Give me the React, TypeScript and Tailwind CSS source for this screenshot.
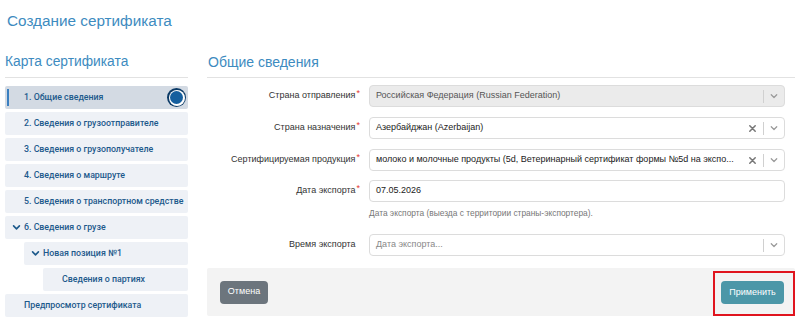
import React from "react";

const F = { fontFamily: '"Liberation Sans", Arial, sans-serif' };
const R = { fontFamily: 'Roboto, "Liberation Sans", Arial, sans-serif' };

function Chevron() {
  return (
    <svg width="10" height="10" viewBox="0 0 20 20" className="text-[#999]">
      <path d="M4.5 7.5 L10 13 L15.5 7.5" fill="none" stroke="currentColor" strokeWidth="2.4" strokeLinecap="round" strokeLinejoin="round" />
    </svg>
  );
}

function Cross() {
  return (
    <svg width="9" height="9" viewBox="0 0 20 20" className="text-[#777]">
      <path d="M4 4 L16 16 M16 4 L4 16" fill="none" stroke="currentColor" strokeWidth="3.4" strokeLinecap="round" />
    </svg>
  );
}

function DownSmall() {
  return (
    <svg width="9" height="9" viewBox="0 0 20 20" className="text-[#1d5a8c] shrink-0">
      <path d="M3.5 6.5 L10 13 L16.5 6.5" fill="none" stroke="currentColor" strokeWidth="3.6" strokeLinecap="round" strokeLinejoin="round" />
    </svg>
  );
}

function NavItem({ children, active, indent = 0, pl = "pl-[19px]" }: { children: React.ReactNode; active?: boolean; indent?: number; pl?: string }) {
  return (
    <div
      className={`relative h-[23px] flex items-center rounded-[2px] ${pl} text-[8.8px] font-medium text-[#1d5a8c] whitespace-nowrap ${active ? "bg-[#d3dae3]" : "bg-[#eef1f6]"}`}
      style={{ ...R, marginLeft: indent }}
    >
      {active && <div className="absolute left-[2px] top-[3px] bottom-[3px] w-[2px] bg-[#3a7fc0]" />}
      {children}
      {active && (
        <div className="absolute right-[2px] top-[2px] w-[19px] h-[19px] rounded-full bg-[#0b3a66] flex items-center justify-center">
          <div className="w-[16px] h-[16px] rounded-full bg-white flex items-center justify-center">
            <div className="w-[13px] h-[13px] rounded-full bg-[#155f9e]" />
          </div>
        </div>
      )}
    </div>
  );
}

function Label({ children, req }: { children: React.ReactNode; req?: boolean }) {
  return (
    <div className="w-[155px] shrink-0 text-right text-[9px] text-[#333] pr-[2px] whitespace-nowrap">
      {children}
      {req ? <span className="text-[#e53935] relative top-[-2px] ml-[1px]">*</span> : <span className="ml-[1px] invisible">*</span>}
    </div>
  );
}

function Select({ value, disabled, clear, placeholder }: { value?: string; disabled?: boolean; clear?: boolean; placeholder?: string }) {
  return (
    <div className={`ml-[7px] w-[416px] h-[22px] rounded-[4px] border border-[#dcdcdc] flex items-center ${disabled ? "bg-[#ebebeb]" : "bg-white"}`}>
      <div className={`flex-1 min-w-0 pl-[6px] text-[9px] whitespace-nowrap overflow-hidden ${placeholder ? "text-[#888]" : disabled ? "text-[#555]" : "text-[#222]"}`}>
        {value ?? placeholder}
      </div>
      {clear && (
        <div className="w-[22px] flex items-center justify-center">
          <Cross />
        </div>
      )}
      <div className="w-px h-[13px] bg-[#d0d0d0]" />
      <div className="w-[20px] flex items-center justify-center">
        <Chevron />
      </div>
    </div>
  );
}

export default function App() {
  return (
    <div className="w-[800px] h-[323px] bg-white overflow-hidden" style={F}>
      <div className="pl-[7px] pt-[11px] h-[52px] text-[15.3px] leading-[20px] text-[#3d8bc0]">Создание сертификата</div>
      <div className="flex pl-[5px] pr-[5px] gap-[19px]">
        <div className="w-[183px] shrink-0">
          <div className="text-[13.8px] text-[#3d8bc0] leading-[20px] pb-[5px] border-b border-[#e2e2e2]">Карта сертификата</div>
          <div className="flex flex-col gap-[3px] mt-[8px]">
            <NavItem active>1. Общие сведения</NavItem>
            <NavItem>2. Сведения о грузоотправителе</NavItem>
            <NavItem>3. Сведения о грузополучателе</NavItem>
            <NavItem>4. Сведения о маршруте</NavItem>
            <NavItem>5. Сведения о транспортном средстве</NavItem>
            <NavItem pl="pl-[7px]">
              <DownSmall />
              <span className="ml-[3px]">6. Сведения о грузе</span>
            </NavItem>
            <NavItem indent={19} pl="pl-[7px]">
              <DownSmall />
              <span className="ml-[3px]">Новая позиция №1</span>
            </NavItem>
            <NavItem indent={38} pl="pl-[19px]">Сведения о партиях</NavItem>
            <NavItem pl="pl-[19px]">Предпросмотр сертификата</NavItem>
          </div>
        </div>
        <div className="flex-1">
          <div className="pl-[1px] text-[14px] text-[#3d8bc0] leading-[20px] pb-[5px] border-b border-[#e2e2e2]">Общие сведения</div>
          <div className="mt-[7px] flex flex-col">
            <div className="flex items-center h-[22px]">
              <Label req>Страна отправления</Label>
              <Select disabled value="Российская Федерация (Russian Federation)" />
            </div>
            <div className="flex items-center h-[22px] mt-[10px]">
              <Label req>Страна назначения</Label>
              <Select clear value="Азербайджан (Azerbaijan)" />
            </div>
            <div className="flex items-center h-[22px] mt-[10px]">
              <Label req>Сертифицируемая продукция</Label>
              <Select clear value="молоко и молочные продукты (5d, Ветеринарный сертификат формы №5d на экспо..." />
            </div>
            <div className="flex items-center h-[22px] mt-[9px]">
              <Label req>Дата экспорта</Label>
              <div className="ml-[7px] w-[416px] h-[22px] rounded-[4px] border border-[#dcdcdc] bg-white flex items-center pl-[6px] text-[9px] text-[#222]">
                07.05.2026
              </div>
            </div>
            <div className="pl-[162px] mt-[5px] text-[8.4px] text-[#777] h-[13px] leading-[13px]">
              Дата экспорта (выезда с территории страны-экспортера).
            </div>
            <div className="flex items-center h-[22px] mt-[14px]">
              <Label>Время экспорта</Label>
              <Select placeholder="Дата экспорта..." />
            </div>
          </div>
          <div className="mt-[12px] h-[48px] bg-[#f3f3f3] rounded-[2px] flex justify-between pl-[13px] pr-0">
            <button className="self-center h-[23px] w-[48px] rounded-[4px] bg-[#6c757d] text-white text-[9px]" style={F}>Отмена</button>
            <div className="self-end border-2 border-[#e0141e] h-[45px] w-[82px] flex items-center justify-center">
              <button className="h-[23px] w-[63px] rounded-[4px] bg-[#4c97a8] text-white text-[9px] -mt-[2px] -ml-[3px]" style={F}>Применить</button>
            </div>
          </div>
        </div>
      </div>
    </div>
  );
}
